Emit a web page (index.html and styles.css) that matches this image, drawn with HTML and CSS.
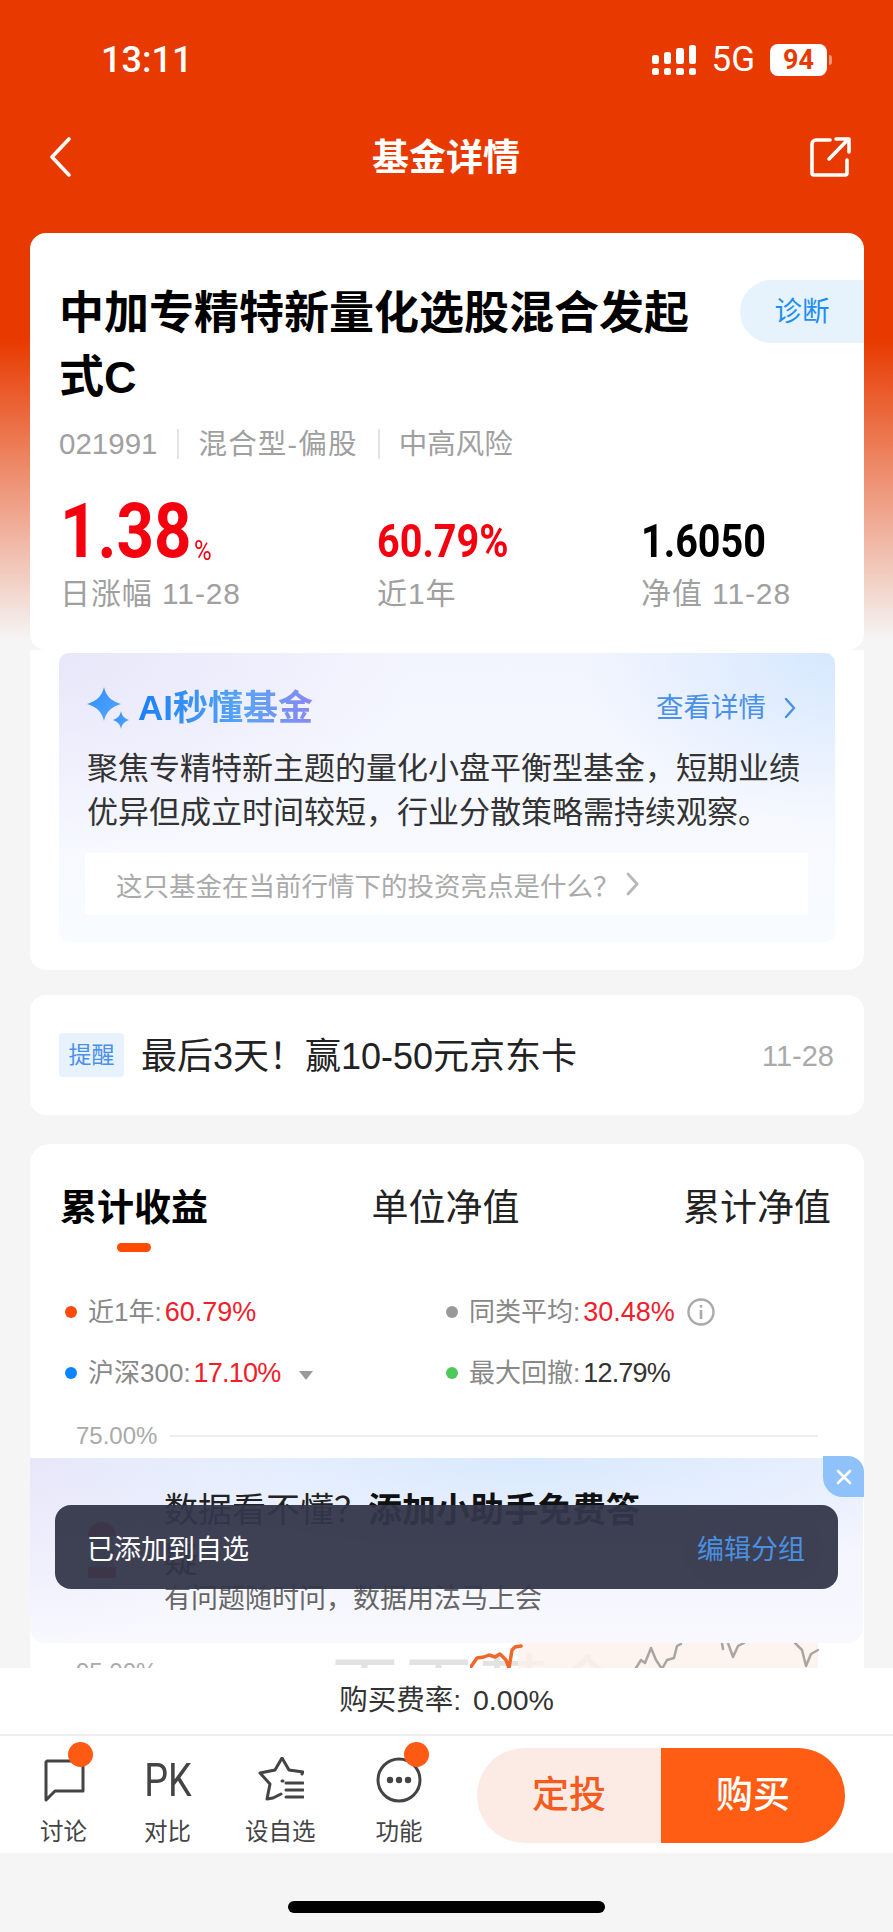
FILE: index.html
```html
<!DOCTYPE html>
<html lang="zh-CN">
<head>
    <meta charset="UTF-8">
    <meta name="viewport" content="width=device-width, initial-scale=1.0">
    <title>基金详情</title>
    <link rel="stylesheet" href="styles.css">
</head>
<body>
    <div class="app">
        <div class="status-bar">
            <span class="clock">13:11</span>
            <div class="status-right">
                <svg class="signal" width="45" height="30" viewBox="0 0 45 30" fill="#fff">
                    <rect x="0" y="10" width="7" height="9" rx="2.5"/><rect x="12" y="7" width="7" height="12" rx="2.5"/>
                    <rect x="24" y="3" width="8" height="16" rx="2.5"/><rect x="37" y="0" width="7" height="19" rx="2.5"/>
                    <rect x="0" y="23" width="7" height="7" rx="2.5"/><rect x="12" y="23" width="7" height="7" rx="2.5"/>
                    <rect x="24" y="23" width="8" height="7" rx="2.5"/><rect x="37" y="23" width="7" height="7" rx="2.5"/>
                </svg>
                <span class="network">5G</span>
                <span class="battery">94</span>
                <span class="battery-tip"></span>
            </div>
        </div>

        <div class="nav-bar">
            <svg class="nav-back" width="24" height="42" viewBox="0 0 24 42" fill="none" stroke="#fff" stroke-width="3.6" stroke-linecap="round" stroke-linejoin="round"><path d="M20 3 3 21l17 18"/></svg>
            <span class="nav-title">基金详情</span>
            <svg width="42" height="42" viewBox="0 0 42 42" fill="none" stroke="#fff" stroke-width="3.6" stroke-linecap="round" stroke-linejoin="round"><path d="M21 4H7a4 4 0 0 0-4 4v29a2 2 0 0 0 2 2h31a2 2 0 0 0 2-2V24"/><path d="M20 23 39 3.500"/><path d="M27 3h13v13"/></svg>
        </div>

        <div class="page">
            <div class="card fund-card">
                <div class="fund-head">
                    <h1 class="fund-name">中加专精特新量化选股混合发起式C</h1>
                    <span class="diagnose">诊断</span>
                </div>
                <div class="fund-meta">
                    <span class="fund-code">021991</span>
                    <span class="meta-sep fund-type">混合型-偏股</span>
                    <span class="meta-sep">中高风险</span>
                </div>
                <div class="stats">
                    <div class="stat">
                        <div class="stat-value big red">1.38<small>%</small></div>
                        <div class="stat-label">日涨幅 11-28</div>
                    </div>
                    <div class="stat">
                        <div class="stat-value red">60.79%</div>
                        <div class="stat-label">近1年</div>
                    </div>
                    <div class="stat">
                        <div class="stat-value">1.6050</div>
                        <div class="stat-label">净值 11-28</div>
                    </div>
                </div>
            </div>

            <div class="ai-wrap">
                <div class="ai-box">
                    <div class="ai-head">
                        <div class="ai-title">
                            <svg width="44" height="42" viewBox="0 0 44 42">
                                <defs><linearGradient id="spark" x1="0" y1="0" x2="1" y2="1"><stop offset="0" stop-color="#2b8cff"/><stop offset="1" stop-color="#5aa8ff"/></linearGradient></defs>
                                <path fill="url(#spark)" d="M17 0c2 9 7 14 17 17-10 3-15 8-17 17-2-9-7-14-17-17C10 14 15 9 17 0z"/>
                                <path fill="url(#spark)" d="M34 24c1 5 3 7 8 9-5 2-7 4-8 9-1-5-3-7-8-9 5-2 7-4 8-9z"/>
                            </svg>
                            <span class="ai-text">AI秒懂基金</span>
                        </div>
                        <div class="ai-more">查看详情
                            <svg width="12" height="22" viewBox="0 0 12 22" fill="none" stroke="#4a90e8" stroke-width="2.400" stroke-linecap="round" stroke-linejoin="round"><path d="M2 2l8 9-8 9"/></svg>
                        </div>
                    </div>
                    <p class="ai-body">聚焦专精特新主题的量化小盘平衡型基金，短期业绩优异但成立时间较短，行业分散策略需持续观察。</p>
                    <div class="ai-ask">这只基金在当前行情下的投资亮点是什么？
                        <svg width="16" height="24" viewBox="0 0 16 24" fill="none" stroke="#b8b8b8" stroke-width="2.800" stroke-linecap="round" stroke-linejoin="round"><path d="M3 2l9 10-9 10"/></svg>
                    </div>
                </div>
            </div>

            <div class="card notice">
                <span class="notice-tag">提醒</span>
                <span class="notice-text">最后3天！赢10-50元京东卡</span>
                <span class="notice-date">11-28</span>
            </div>

            <div class="card chart-card">
                <div class="tabs">
                    <div class="tab active">累计收益<i class="tab-line"></i></div>
                    <div class="tab">单位净值</div>
                    <div class="tab">累计净值</div>
                </div>
                <div class="legend">
                    <div class="legend-item"><i class="dot orange"></i>近1年:<b class="red">60.79%</b></div>
                    <div class="legend-item"><i class="dot gray"></i>同类平均:<b class="red">30.48%</b>
                        <svg class="info" width="28" height="28" viewBox="0 0 28 28" fill="none" stroke="#aaa" stroke-width="2.400"><circle cx="14" cy="14" r="12.500"/><path d="M14 12v9" stroke-width="2.600"/><path d="M14 7v2.600" stroke-width="2.600"/></svg>
                    </div>
                    <div class="legend-item"><i class="dot blue"></i>沪深300:<b class="red tight">17.10%</b><i class="caret"></i></div>
                    <div class="legend-item"><i class="dot green"></i>最大回撤:<b class="tight">12.79%</b></div>
                </div>
                <div class="chart">
                    <div class="axis-row"><span>75.00%</span><i></i></div>
                    <div class="axis-row"><span>95.00%</span><i></i></div>
                    <div class="watermark">天天基金</div>
                    <svg class="plot" width="360" height="30" viewBox="470 1643 360 30" fill="none" stroke-width="3" stroke-linejoin="round" stroke-linecap="round">
                        <rect x="518" y="1643" width="300" height="30" fill="#fdf1ec" fill-opacity="0.8" stroke="none"/>
                        <path stroke="#f0672c" stroke-width="3.500" d="M470 1668l7-10 7-1 5-2 6 2 5-3 6 6 3 8 3-18 3-3 6-1"/>
                        <path stroke="#a9a5a1" stroke-width="2.500" d="M636 1668l5-8 4 3 6-15 5 12 6 9 5-9 7-2 3-12 4-2"/>
                        <path stroke="#a9a5a1" stroke-width="2.500" d="M722 1643l1 6M728 1643l5 14 5-11 6-3"/>
                        <path stroke="#a9a5a1" stroke-width="2.500" d="M795 1643l7 7 4 16 5-12 7-4"/>
                    </svg>
                </div>
            </div>
        </div>

        <div class="banner">
            <svg class="banner-pic" width="32" height="66" viewBox="0 0 32 66"><path fill="#e2332b" d="M2 24a14 14 0 0 1 28 0z"/><rect x="2" y="55" width="28" height="11" fill="#e2332b"/><rect x="5" y="24" width="22" height="31" fill="#bbb"/></svg>
            <div class="banner-title">数据看不懂？<b>添加小助手免费答</b>疑</div>
            <div class="banner-sub">有问题随时问，数据用法马上会</div>
            <span class="banner-btn"></span>
            <span class="banner-close">
                <svg width="18" height="18" viewBox="0 0 18 18" stroke="#fff" stroke-width="2.600" stroke-linecap="round"><path d="M3 3l12 12M15 3 3 15"/></svg>
            </span>
        </div>

        <div class="toast">
            <span>已添加到自选</span>
            <span class="toast-link">编辑分组</span>
        </div>

        <div class="footer">
            <div class="fee">购买费率: 0.00%</div>
            <div class="toolbar">
                <div class="tools">
                    <div class="tool">
                        <svg width="42" height="46" viewBox="0 0 42 46" fill="none" stroke="#444" stroke-width="3" stroke-linejoin="round" stroke-linecap="round"><path d="M4 4h36v30H12L3 43V5z"/></svg>
                        <i class="tool-dot"></i>
                        讨论
                    </div>
                    <div class="tool"><span class="tool-pk"><span>PK</span></span>对比</div>
                    <div class="tool tool-watch">
                        <svg width="48" height="46" viewBox="0 0 48 46" fill="none" stroke="#444" stroke-width="3" stroke-linejoin="round" stroke-linecap="round"><path d="M27 24h-1M46 17l1-2-14-2-7-12-7 12-15 3 10 11-3 15 6-1 8-4"/><path stroke-width="3" d="M30 26h17M30 33h17M30 40h17"/></svg>
                        设自选
                    </div>
                    <div class="tool tool-more">
                        <svg width="46" height="46" viewBox="0 0 46 46" fill="#444"><circle cx="23" cy="23" r="21" fill="none" stroke="#444" stroke-width="3"/><circle cx="14" cy="23" r="3.200"/><circle cx="23" cy="23" r="3.200"/><circle cx="32" cy="23" r="3.200"/></svg>
                        <i class="tool-dot"></i>
                        功能
                    </div>
                </div>
                <div class="buy-group">
                    <span class="buy plan">定投</span>
                    <span class="buy now">购买</span>
                </div>
            </div>
            <div class="home-area"><i class="home-bar"></i></div>
        </div>
    </div>
</body>
</html>
```

FILE: styles.css
```css
* { box-sizing: border-box; }
body {
    margin: 0;
    font-family: "Liberation Sans", "Noto Sans CJK SC", sans-serif;
    color: #222;
}
.app {
    position: relative;
    width: 893px; height: 1932px;
    overflow: hidden;
    display: flex; flex-direction: column;
    background: linear-gradient(#e83a00 0, #e83a00 340px, #f5f5f5 640px);
}
i { font-style: normal; }
.red { color: #f5101a; }

/* top bars */
.status-bar {
    height: 120px; flex: none;
    padding: 0 61px 0 101px;
    display: flex; align-items: center; justify-content: space-between;
    color: #fff;
}
.clock { font: 500 36px/40px Roboto, sans-serif; }
.status-right { display: flex; align-items: center; }
.network { font: 400 35px/36px Roboto, sans-serif; margin: 0 15px 0 14px; }
.battery {
    width: 57px; height: 32px;
    background: #fff; border-radius: 8px;
    color: #e83a00;
    font: 700 27px/32px Roboto, sans-serif; text-align: center;
}
.battery-tip {
    width: 3px; height: 10px; margin-left: 2px;
    background: #f49a7a; border-radius: 0 3px 3px 0;
}
.nav-bar {
    height: 74px; flex: none;
    padding: 0 42px 0 49px;
    display: flex; align-items: center; justify-content: space-between;
}
.nav-back { margin-right: 10px; }
.nav-title { padding-top: 4px; font-size: 37px; line-height: 50px; font-weight: 700; color: #fff; }

/* scrolling part */
.page {
    flex: 1; min-height: 0;
    overflow: hidden;
    padding-top: 39px;
    width: 834px; margin-left: 30px;
}
.card { background: #fff; border-radius: 16px; }

.fund-card { height: 417px; padding: 49px 0 0 29px; }
.fund-head { display: flex; align-items: flex-start; }
.fund-name {
    flex: 1; margin: 0; padding-right: 40px;
    font-size: 45px; line-height: 64px; font-weight: 700; color: #000;
}
.diagnose {
    flex: none; width: 124px; height: 63px; margin-top: -2px;
    background: #e6f3fd; color: #1e8ef0;
    border-radius: 32px 0 0 32px;
    font-size: 27.5px; line-height: 63px; text-align: center;
}
.fund-meta {
    display: flex; align-items: center;
    margin-top: 14px;
    font-size: 28.5px; line-height: 40px; color: #a0a0a0;
}
.fund-code { font-size: 29.500px; }
.fund-type { letter-spacing: 1.2px; }
.meta-sep { margin-left: 20px; padding-left: 19px; border-left: 2px solid #e4e4e4; line-height: 30px; }
.stats {
    display: grid; grid-template-columns: 317px 264px 1fr;
    padding-left: 1px; margin-top: 27px;
}
.stat { display: flex; flex-direction: column; justify-content: flex-end; }
.stat-value {
    font: 700 46px/60px Roboto, sans-serif;
    color: #000;
    transform: scaleX(0.86); transform-origin: left;
}
.stat-value.red { color: #f5000f; }
.stat-value.big { font-size: 76px; line-height: 80px; }
.stat-value small { font-size: 28px; font-weight: 400; line-height: 0; vertical-align: -3px; margin-left: 3px; }
.stat-label { font-size: 30px; line-height: 40px; margin-top: 3px; color: #a0a0a0; letter-spacing: 0.9px; }

/* ai block */
.ai-wrap {
    background: #fff;
    padding: 3px 29px 28px;
    border-radius: 0 0 16px 16px;
}
.ai-box {
    padding: 33px 27px 27px 28px;
    border-radius: 10px;
    background:
        radial-gradient(260px 170px at 100% 0, #d6e8fe, rgba(214, 232, 254, 0) 100%),
        radial-gradient(360px 200px at 0 0, #e8e7fa, rgba(232, 231, 250, 0) 100%),
        linear-gradient(#f3f5fe, #f8fbff);
}
.ai-head { display: flex; align-items: center; justify-content: space-between; height: 44px; }
.ai-title { display: flex; align-items: center; }
.ai-text {
    margin-left: 7px;
    font-size: 35px; line-height: 44px; font-weight: 700;
    background: linear-gradient(90deg, #1a7ff5, #5aa5f5 60%, #8a87f0);
    -webkit-background-clip: text; background-clip: text;
    color: transparent;
}
.ai-more { display: flex; align-items: center; gap: 18px; padding-right: 12px; font-size: 27.5px; line-height: 44px; color: #4a90e8; }
.ai-body { margin: 17px 0 0; font-size: 31px; line-height: 44px; color: #333; width: 720px; }
.ai-ask {
    display: flex; align-items: center; gap: 5px;
    height: 62px; margin: 18px 0 0 -2px; padding-left: 31px;
    background: rgba(255, 255, 255, 0.95);
    font-size: 26.5px; color: #aaa;
}

/* notice */
.notice {
    height: 120px; margin-top: 25px;
    padding: 0 30px 0 29px;
    display: flex; align-items: center;
}
.notice-tag {
    width: 65px; height: 44px; border-radius: 4px;
    background: #e8f2fd; color: #4a90e8;
    font-size: 23px; line-height: 44px; text-align: center;
}
.notice-text { margin-left: 17px; padding-top: 4px; font-size: 36px; line-height: 50px; color: #222; flex: 1; }
.notice-date { padding-top: 2px; font-size: 29px; color: #aaa; }

/* chart card */
.chart-card { margin-top: 29px; height: 800px; padding-top: 40px; border-radius: 20px; }
.tabs { display: flex; justify-content: space-between; align-items: flex-start; padding: 0 33px 0 30px; }
.tab { display: flex; flex-direction: column; align-items: center; font-size: 37px; line-height: 50px; color: #222; }
.tab.active { font-weight: 700; color: #000; }
.tab-line { width: 34px; height: 9px; margin-top: 9px; border-radius: 5px; background: #ff4a00; }
.legend {
    display: grid; grid-template-columns: 381px 1fr; row-gap: 21px;
    margin-top: 40px; padding-left: 35px;
    font-size: 26px; line-height: 40px; color: #888;
}
.legend-item { display: flex; align-items: center; }
.legend-item b { font-weight: 400; font-size: 27px; color: #333; margin-left: 3px; }
.legend-item b.red { color: #f0202a; }
.legend-item b.tight { letter-spacing: -0.8px; }
.dot { width: 12px; height: 12px; border-radius: 50%; margin-right: 11px; }
.dot.orange { background: #ff4a0a; }
.dot.gray { background: #999; }
.dot.blue { background: #0a84ff; }
.dot.green { background: #4fc95b; }
.info { margin-left: 12px; }
.caret {
    margin-left: 19px; margin-top: 4px;
    border: 7px solid transparent; border-top: 9px solid #999; border-bottom: 0;
}
.chart { position: relative; margin-top: 28px; padding: 0 46px; }
.axis-row { display: flex; align-items: center; height: 30px; margin-bottom: 206px; font-size: 24px; color: #aaa; }
.axis-row i { flex: 1; height: 2px; margin-left: 13px; background: #eee; }
.watermark {
    position: absolute; left: 298px; top: 225px;
    font-size: 74px; line-height: 90px; font-weight: 400; color: #e2e2e2;
    white-space: nowrap;
}
.plot { position: absolute; left: 440px; top: 222px; }

/* floating things */
.banner {
    position: absolute; left: 30px; top: 1458px;
    width: 833px; height: 185px;
    padding: 27px 0 0 134px;
    border-radius: 0 16px 16px 16px;
    background:
        radial-gradient(520px 120px at 60% 0, #d9e9fe, rgba(217, 233, 254, 0) 100%),
        radial-gradient(260px 185px at 0 0, #e8e7fa, rgba(232, 231, 250, 0) 100%),
        linear-gradient(#f1f3fe, #f8f8fe);
}
.banner-pic { position: absolute; left: 56px; top: 54px; }
.banner-title { width: 490px; font-size: 34px; line-height: 50px; color: #222; }
.banner-title b { font-weight: 700; color: #111; }
.banner-sub { margin-top: -2px; font-size: 27px; line-height: 32px; color: #666; }
.banner-btn {
    position: absolute; left: 652px; top: 57px;
    width: 141px; height: 68px; border-radius: 34px;
    background: #e0e0ea;
}
.banner-close {
    position: absolute; right: -1px; top: -2px;
    width: 41px; height: 41px;
    display: flex; align-items: center; justify-content: center;
    background: #8fc1fb;
    border-radius: 0 16px 0 20px;
}
.toast {
    position: absolute; left: 55px; top: 1505px;
    width: 783px; height: 84px;
    padding: 0 33px 0 32px;
    display: flex; align-items: center; justify-content: space-between;
    border-radius: 16px;
    background: rgba(52, 54, 74, 0.95);
    font-size: 27px; color: #fff;
}
.toast-link { color: #4a90e0; }

/* bottom bar */
.footer { flex: none; position: relative; }
.fee {
    height: 68px;
    background: #fff;
    border-bottom: 2px solid #eee;
    font-size: 28.5px; line-height: 65px; text-align: center; color: #333;
    word-spacing: 4px;
}
.toolbar { height: 117px; display: flex; align-items: flex-start; background: #fff; padding-right: 48px; }
.tools { display: flex; gap: 57px; padding: 21px 0 0 40px; }
.tool {
    position: relative;
    display: flex; flex-direction: column; align-items: center;
    font-size: 23.500px; line-height: 30px; color: #444;
}
.tool-watch { margin-left: -3px; }
.tool-more { margin-left: 3px; }
.tool svg, .tool-pk { margin-bottom: 14px; }
.tool-pk {
    display: flex; justify-content: center;
    width: 47px; height: 46px;
    font: 400 46px/46px Roboto, sans-serif;
    color: #444;
}
.tool-pk span { transform: scaleX(0.82); }
.tool-dot {
    position: absolute; left: 28px; top: -15px;
    width: 25px; height: 25px; border-radius: 50%;
    background: #ff5a14;
}
.buy-group { margin: 12px 0 0 auto; display: flex; height: 95px; border-radius: 48px; overflow: hidden; }
.buy { width: 184px; font-size: 37px; line-height: 95px; text-align: center; font-weight: 500; }
.plan { background: #fcebe4; color: #f55a1e; }
.now { background: #ff5c14; color: #fff; }
.home-area { height: 79px; background: #f5f5f5; padding-top: 48px; }
.home-bar { display: block; width: 317px; height: 12px; margin: 0 auto; border-radius: 6px; background: #000; }
```
